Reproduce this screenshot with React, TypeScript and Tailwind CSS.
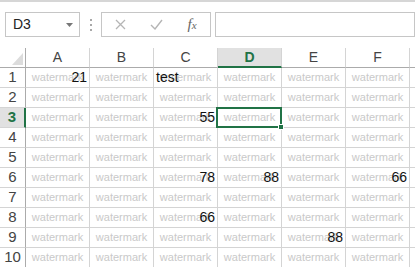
import React from 'react';

const COLS = ['A', 'B', 'C', 'D', 'E', 'F', 'G'];
const ROWS = [1, 2, 3, 4, 5, 6, 7, 8, 9, 10];

const values: Record<string, { v: string; left?: boolean }> = {
  A1: { v: '21' },
  C1: { v: 'test', left: true },
  C3: { v: '55' },
  C6: { v: '78' },
  D6: { v: '88' },
  F6: { v: '66' },
  C8: { v: '66' },
  E9: { v: '88' },
};

function Cell({ id }: { id: string }) {
  const val = values[id];
  const selected = id === 'D3';
  return (
    <div className="relative grid border-r border-b border-[#d4d4d4] leading-[19px]">
      <div className="col-start-1 row-start-1 flex justify-center text-[11px] text-[#c9c9c9]">watermark</div>
      {val && (
        <div
          className={`col-start-1 row-start-1 flex text-[14px] text-[#111] ${
            val.left ? 'justify-start pl-[2px]' : 'justify-end pr-[2px]'
          }`}
        >
          {val.v}
        </div>
      )}
      {selected && (
        <>
          <div className="absolute -left-[2px] -top-[1px] -right-[1px] -bottom-[1px] border-2 border-[#217346] z-10" />
          <div className="absolute -right-[3px] -bottom-[3px] w-[6px] h-[6px] bg-[#217346] border border-white z-20" />
        </>
      )}
    </div>
  );
}

export default function App() {
  return (
    <div className="w-[415px] h-[267px] overflow-hidden bg-white font-['Liberation_Sans',sans-serif] text-[#444]">
      <div className="h-[2px] bg-[#d6d6d6]" />

      <div className="flex items-center h-[25px] mt-[10px] pl-[5px]">
        <div className="w-[102px] h-[25px] flex items-center border border-[#c6c6c6] pl-[7px] pr-[6px] text-[14px] text-[#222]">
          D3
          <svg className="ml-auto" width="7" height="4" viewBox="0 0 7 4">
            <path d="M0 0h7L3.5 4z" fill="#777" />
          </svg>
        </div>
        <div className="w-[30px] flex flex-col items-center gap-[3px]">
          <div className="w-[2px] h-[2px] bg-[#a8a8a8]" />
          <div className="w-[2px] h-[2px] bg-[#a8a8a8]" />
          <div className="w-[2px] h-[2px] bg-[#a8a8a8]" />
        </div>
        <div className="w-[110px] h-[25px] flex items-center border border-[#c6c6c6]">
          <div className="w-[36px] flex justify-center">
            <svg width="11" height="11" viewBox="0 0 11 11">
              <path d="M1 1l9 9M10 1l-9 9" stroke="#b5b5b5" strokeWidth="1.3" />
            </svg>
          </div>
          <div className="w-[36px] flex justify-center">
            <svg width="13" height="11" viewBox="0 0 13 11">
              <path d="M1 6l4 4 7-9" stroke="#b5b5b5" strokeWidth="1.4" fill="none" />
            </svg>
          </div>
          <div className="w-[36px] flex justify-center items-baseline font-['Liberation_Serif',serif] italic text-[#666]">
            <span className="text-[15px]">f</span>
            <span className="text-[11px]">x</span>
          </div>
        </div>
        <div className="ml-[4px] w-[200px] shrink-0 h-[25px] border border-[#c6c6c6]" />
      </div>

      <div className="mt-[11px] grid grid-cols-[26px_repeat(7,64px)] grid-rows-[repeat(11,20px)]">
        <div className="border-r border-b border-[#ababab] flex items-end justify-end pr-[2px] pb-[2px]">
          <svg width="11" height="12" viewBox="0 0 11 12">
            <path d="M11 0v12H0z" fill="#dcdcdc" />
          </svg>
        </div>
        {COLS.map((c) =>
          c === 'D' ? (
            <div
              key={c}
              className="flex items-center justify-center bg-[#e1e1e1] border-r border-r-[#d4d4d4] border-b-2 border-b-[#217346] text-[14px] font-bold text-[#217346]"
            >
              {c}
            </div>
          ) : (
            <div
              key={c}
              className="flex items-center justify-center border-r border-r-[#d4d4d4] border-b border-b-[#ababab] text-[14px]"
            >
              {c}
            </div>
          )
        )}
        {ROWS.map((r) => (
          <React.Fragment key={r}>
            {r === 3 ? (
              <div className="flex items-center justify-center bg-[#e1e1e1] border-r-2 border-r-[#217346] border-b border-b-[#d4d4d4] text-[15px] font-bold text-[#217346]">
                {r}
              </div>
            ) : (
              <div className="flex items-center justify-center border-r border-r-[#ababab] border-b border-b-[#d4d4d4] text-[15px]">
                {r}
              </div>
            )}
            {COLS.map((c) => (
              <Cell key={c + r} id={c + r} />
            ))}
          </React.Fragment>
        ))}
      </div>
    </div>
  );
}
